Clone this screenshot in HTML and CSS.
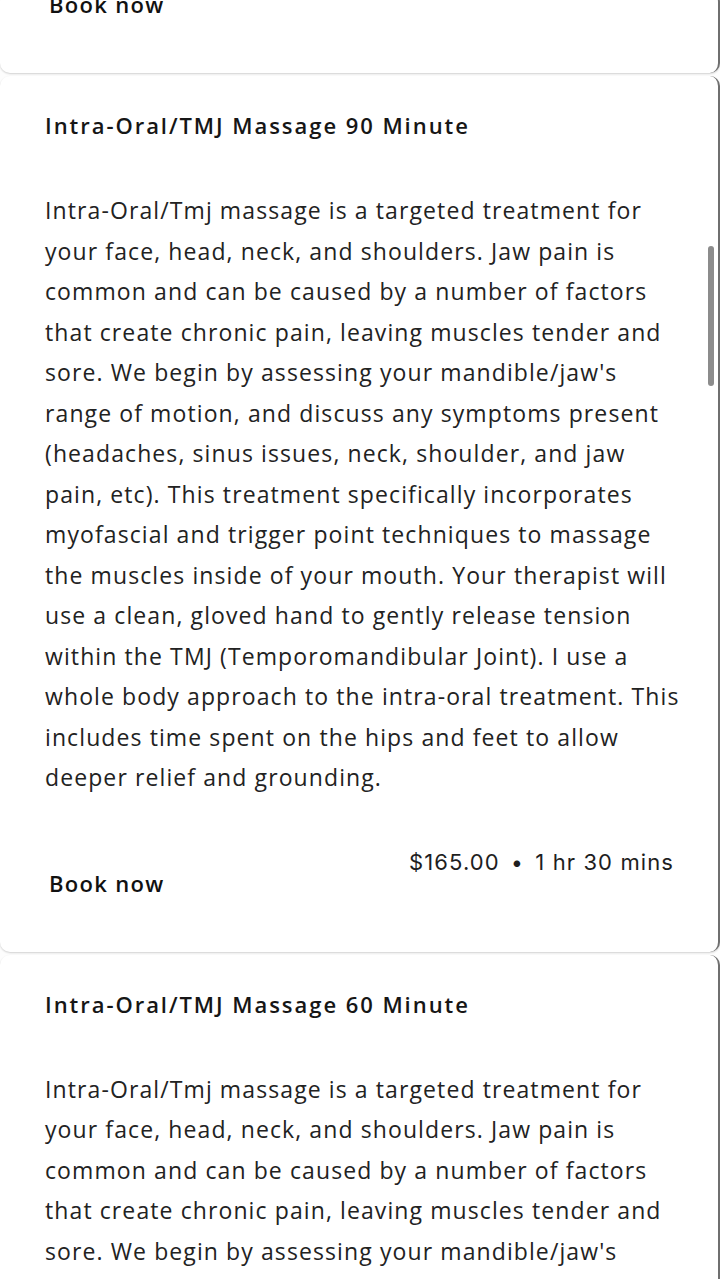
FILE: index.html
```html
<!DOCTYPE html>
<html lang="en">
<head>
<meta charset="utf-8">
<title>Services</title>
<link rel="stylesheet" href="styles.css">
</head>
<body>
<div class="list">
  <section class="card card-partial">
    <div class="footer">
      <a class="book" href="#">Book now</a>
    </div>
  </section>

  <section class="card">
    <h2 class="title">Intra-Oral/TMJ Massage 90 Minute</h2>
    <p class="desc">Intra-Oral/Tmj massage is a targeted treatment for your face, head, neck, and shoulders. Jaw pain is common and can be caused by a number of factors that create chronic pain, leaving muscles tender and sore. We begin by assessing your mandible/jaw's range of motion, and discuss any symptoms present (headaches, sinus issues, neck, shoulder, and jaw pain, etc). This treatment specifically incorporates myofascial and trigger point techniques to massage the muscles inside of your mouth. Your therapist will use a clean, gloved hand to gently release tension within the TMJ (Temporomandibular Joint). I use a whole body approach to the intra-oral treatment. This includes time spent on the hips and feet to allow deeper relief and grounding.</p>
    <div class="footer">
      <a class="book" href="#">Book now</a>
      <div class="meta">$165.00 <span class="dot">•</span> 1 hr 30 mins</div>
    </div>
  </section>

  <section class="card">
    <h2 class="title">Intra-Oral/TMJ Massage 60 Minute</h2>
    <p class="desc">Intra-Oral/Tmj massage is a targeted treatment for your face, head, neck, and shoulders. Jaw pain is common and can be caused by a number of factors that create chronic pain, leaving muscles tender and sore. We begin by assessing your mandible/jaw's range of motion, and discuss any symptoms present (headaches, sinus issues, neck, shoulder, and jaw pain, etc).</p>
  </section>
</div>
<div class="scrollbar"></div>
</body>
</html>
```

FILE: styles.css
```css
html, body {
  margin: 0;
  padding: 0;
  background: #fdfdfd;
  overflow: hidden;
}

body {
  width: 720px;
  height: 1279px;
  color: #1e1e1e;
  font-family: "Open Sans", "Lato", sans-serif;
  position: relative;
}

.list {
  display: flex;
  flex-direction: column;
  gap: 3px;
  margin-top: -8px;
}

.card {
  background: #fff;
  border-radius: 10px;
  box-shadow: 0 1px 2px rgba(0, 0, 0, 0.18);
  border-right: 2px solid #6f6f6f;
  padding: 34px 36px 0 45px;
}

.card-partial {
  padding-top: 0;
}

.title {
  margin: 0;
  font-size: 22px;
  line-height: 30px;
  font-weight: 600;
  letter-spacing: 1.95px;
  color: #161616;
}

.desc {
  margin: 50px 0 0;
  font-size: 23px;
  line-height: 40.5px;
  font-weight: 400;
  letter-spacing: 1.1px;
  color: #222;
}

.footer {
  display: flex;
  justify-content: space-between;
  align-items: flex-start;
  padding: 49px 0 57px;
}

.card-partial .footer {
  padding-top: 0;
}

.book {
  color: #111;
  text-decoration: none;
  font-family: "Open Sans", sans-serif;
  font-size: 22px;
  line-height: 24px;
  font-weight: 600;
  letter-spacing: 1.3px;
  margin-left: 4px;
  padding-top: 24px;
}

.card-partial .book {
  padding-top: 0;
}

.meta {
  font-family: "Inter", sans-serif;
  font-size: 22px;
  line-height: 30px;
  letter-spacing: 1.1px;
  color: #1e1e1e;
  margin-right: 8px;
}

.dot {
  margin: 0 4px;
  font-size: 21px;
}

.scrollbar {
  position: absolute;
  left: 708px;
  top: 246px;
  width: 6px;
  height: 140px;
  border-radius: 3px;
  background: #8c8c8c;
}
```
